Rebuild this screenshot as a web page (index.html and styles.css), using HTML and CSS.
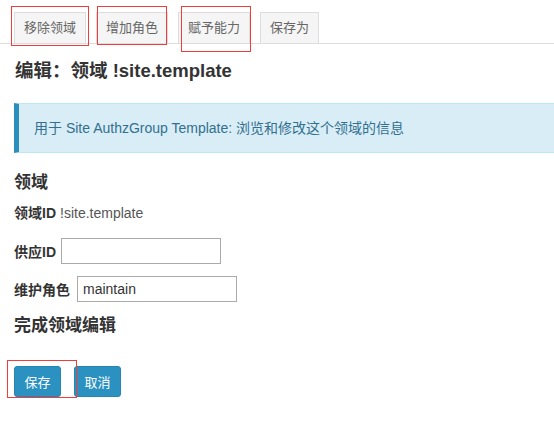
FILE: index.html
```html
<!DOCTYPE html>
<html lang="zh">
<head>
<meta charset="utf-8">
<link rel="stylesheet" href="styles.css">
</head>
<body>
<div class="page">
  <nav class="tabs">
    <span class="tab">移除领域</span>
    <span class="tab">增加角色</span>
    <span class="tab">赋予能力</span>
    <span class="tab">保存为</span>
  </nav>
  <h2 class="title">编辑：领域 !site.template</h2>
  <div class="info">用于 Site AuthzGroup Template: 浏览和修改这个领域的信息</div>
  <h3 class="section">领域</h3>
  <div class="row first"><span class="label">领域ID</span> <span class="value">!site.template</span></div>
  <div class="row field"><label class="label">供应ID</label><input class="input" type="text" value=""></div>
  <div class="row field second"><label class="label">维护角色</label><input class="input" type="text" value="maintain"></div>
  <h3 class="section done">完成领域编辑</h3>
  <div class="actions">
    <button class="btn">保存</button>
    <button class="btn">取消</button>
  </div>
</div>
<div class="mark m1"></div>
<div class="mark m2"></div>
<div class="mark m3"></div>
<div class="mark m4"></div>
</body>
</html>
```
FILE: styles.css
```css
* { box-sizing: border-box; }
html, body { margin: 0; padding: 0; background: #fff; }
body {
  font-family: "Liberation Sans", "Noto Sans CJK SC", sans-serif;
  color: #333;
  width: 554px;
  height: 431px;
  overflow: hidden;
  position: relative;
}
.page { padding-top: 12px; }
.tabs {
  display: flex;
  gap: 10px;
  padding-left: 14px;
  border-bottom: 1px solid #ddd;
  height: 32px;
}
.tab {
  display: block;
  height: 31px;
  line-height: 30px;
  padding: 0 9px;
  font-size: 13px;
  color: #666;
  background: #f5f5f5;
  border: 1px solid #ddd;
  border-bottom: none;
}
.title {
  margin: 15px 0 0 15px;
  font-size: 18.5px;
  line-height: 24px;
  font-weight: bold;
  color: #333;
}
.info {
  margin: 20px 0 0 14px;
  height: 50px;
  line-height: 48px;
  background: #d9edf7;
  border-top: 1px solid #bce8f1;
  border-bottom: 1px solid #bce8f1;
  border-left: 5px solid #2a8fbd;
  padding-left: 15px;
  font-size: 14px;
  color: #31708f;
  white-space: nowrap;
}
.section {
  margin: 19px 0 0 14px;
  font-size: 17px;
  line-height: 22px;
  font-weight: bold;
  color: #333;
}
.row {
  margin-left: 14px;
  font-size: 14px;
  display: flex;
  align-items: center;
}
.row.first { margin-top: 10px; line-height: 18px; }
.row.first .value { margin-left: 4px; }
.label { font-weight: bold; color: #333; }
.value { color: #555; }
.row.field { margin-top: 16px; gap: 5px; }
.row.field.second { margin-top: 12px; gap: 7px; }
.input {
  width: 160px;
  height: 26px;
  border: 1px solid #aaa;
  padding: 0 5px;
  font-family: "Liberation Sans", sans-serif;
  font-size: 14px;
  color: #333;
  background: #fff;
  margin: 0;
}
.section.done { margin-top: 13px; }
.actions {
  margin: 29px 0 0 14px;
  display: flex;
  gap: 13px;
}
.btn {
  width: 47px;
  height: 31px;
  padding: 0;
  border: 1px solid #2585b3;
  border-radius: 3px;
  background: #2a91c0;
  color: #fff;
  font-family: "Liberation Sans", "Noto Sans CJK SC", sans-serif;
  font-size: 13px;
}
.mark {
  position: absolute;
  border: 1px solid #f23c3c;
  background: transparent;
  pointer-events: none;
}
.m1 { left: 11px; top: 6px; width: 78px; height: 40px; }
.m2 { left: 97px; top: 6px; width: 70px; height: 39px; }
.m3 { left: 181px; top: 6px; width: 70px; height: 46px; }
.m4 { left: 7px; top: 360px; width: 70px; height: 38px; }
```
